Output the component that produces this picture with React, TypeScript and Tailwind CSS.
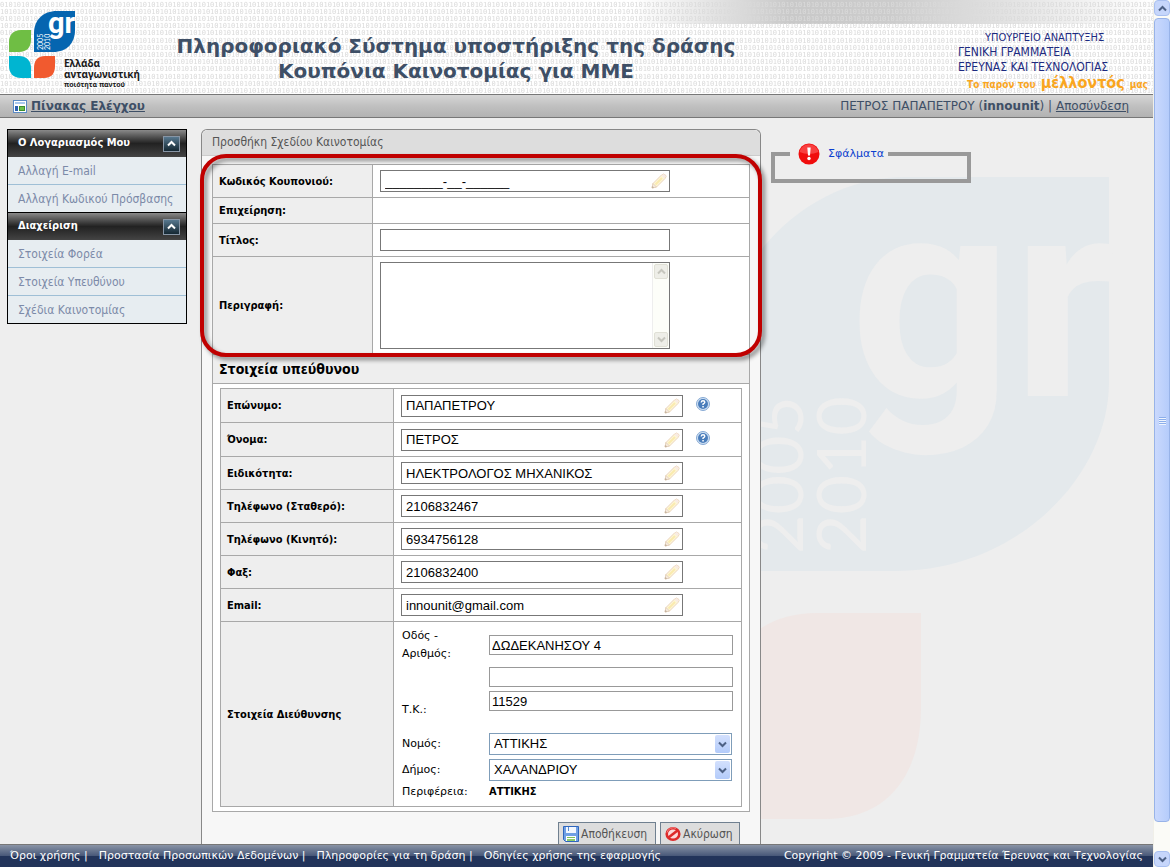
import { ReactNode } from "react";

const menus = [
  { title: "Ο Λογαριασμός Μου", items: ["Αλλαγή E-mail", "Αλλαγή Κωδικού Πρόσβασης"] },
  { title: "Διαχείριση", items: ["Στοιχεία Φορέα", "Στοιχεία Υπευθύνου", "Σχέδια Καινοτομίας"] },
];

const contactFields = [
  { id: "surname", label: "Επώνυμο:", value: "ΠΑΠΑΠΕΤΡΟΥ", help: true },
  { id: "name", label: "Όνομα:", value: "ΠΕΤΡΟΣ", help: true },
  { id: "specialty", label: "Ειδικότητα:", value: "ΗΛΕΚΤΡΟΛΟΓΟΣ ΜΗΧΑΝΙΚΟΣ" },
  { id: "phone", label: "Τηλέφωνο (Σταθερό):", value: "2106832467" },
  { id: "mobile", label: "Τηλέφωνο (Κινητό):", value: "6934756128" },
  { id: "fax", label: "Φαξ:", value: "2106832400" },
  { id: "email", label: "Email:", value: "innounit@gmail.com" },
];

const footerLinks = [
  "Όροι χρήσης",
  "Προστασία Προσωπικών Δεδομένων",
  "Πληροφορίες για τη δράση",
  "Οδηγίες χρήσης της εφαρμογής",
];

const Logo = () => (
  <svg className="block overflow-visible" width="140" height="94" viewBox="0 0 140 94" aria-hidden="true">
    <path d="M75 11H57C43 11 34 20 34 33V52H53C67 52 75 43 75 30Z" fill="#0565b0" />
    <path d="M31 30H21C13 30 9 35 9 42V52H19C27 52 31 47 31 40Z" fill="#6fbe44" />
    <path d="M9 56H19C27 56 31 61 31 68V78H21C13 78 9 73 9 66Z" fill="#00b5d1" />
    <path d="M55 56H45C37 56 34 61 34 68V78H44C52 78 55 73 55 66Z" fill="#f15a2f" />
    <text x="48" y="33" fontFamily="Roboto, sans-serif" fontWeight="700" fontSize="29" fill="#fff">
      gr
    </text>
    <g fontFamily="Lato, sans-serif" fontSize="7" fill="#fff">
      <text transform="translate(43 50) rotate(-90)">2005</text>
      <text transform="translate(50 50) rotate(-90)">2010</text>
    </g>
    <g fontFamily="Noto Sans, sans-serif" fontWeight="700" fill="#1a1a1a">
      <text x="64" y="67" fontSize="10">Ελλάδα</text>
      <text x="64" y="78" fontSize="10">ανταγωνιστική</text>
      <text x="64" y="87" fontSize="7">ποιότητα παντού</text>
    </g>
  </svg>
);

const Watermark = () => (
  <svg
    className="absolute top-[59px] right-[44px] overflow-visible"
    width="393"
    height="650"
    viewBox="0 0 393 650"
    aria-hidden="true"
  >
    <path d="M393 0H190C85 0 0 95 0 200V394H180C300 394 393 300 393 205Z" fill="#e4e9ec" />
    <text x="134" y="219" fontFamily="Roboto, sans-serif" fontWeight="700" fontSize="284" fill="#eeeeee">
      gr
    </text>
    <g fontFamily="Lato, sans-serif" fontSize="68" fill="#eeeeee">
      <text transform="translate(87 377) rotate(-90)">2005</text>
      <text transform="translate(150 377) rotate(-90)">2010</text>
    </g>
    <path d="M205 436H100C40 436 0 480 0 540V642H110C170 642 205 600 205 530Z" fill="#f0e7e5" />
  </svg>
);

const DigitsPattern = () => (
  <svg className="absolute inset-0 h-full w-full" aria-hidden="true">
    <defs>
      <pattern id="digits" width="42" height="36" patternUnits="userSpaceOnUse">
        <g fontFamily="DejaVu Sans Mono, monospace" fontSize="7" fill="#dadada">
          <text x="0" y="6.500">0101010101</text>
          <text x="0" y="13.700">1010101010</text>
          <text x="0" y="20.900">0101010101</text>
          <text x="0" y="28.100">1010101010</text>
          <text x="0" y="35.300">0101010101</text>
        </g>
      </pattern>
      <linearGradient id="band">
        <stop offset="0" stopColor="#bbb" stopOpacity="0" />
        <stop offset="0.3" stopColor="#bbb" stopOpacity="0.8" />
        <stop offset="0.5" stopColor="#bbb" stopOpacity="0.75" />
        <stop offset="1" stopColor="#bbb" stopOpacity="0" />
      </linearGradient>
    </defs>
    <svg x="55%" width="45%" height="24">
      <rect width="100%" height="24" fill="url(#band)" />
    </svg>
    <rect width="100%" height="100%" fill="url(#digits)" />
  </svg>
);

const DashboardIcon = () => (
  <svg width="14" height="13" viewBox="0 0 14 13" aria-hidden="true">
    <rect x="0.5" y="0.5" width="13" height="12" fill="#fff" stroke="#5b8bc4" />
    <rect x="2" y="2" width="10" height="2" fill="#a9c9ee" />
    <rect x="2" y="6" width="3" height="5" fill="#2b5fb0" />
    <rect x="6.5" y="6.5" width="5" height="4" fill="#6cc04a" stroke="#3d8f2c" />
  </svg>
);

const PencilIcon = () => (
  <svg className="pointer-events-none absolute top-[3px] right-[3px]" width="16" height="16" viewBox="0 0 16 16" aria-hidden="true">
    <path d="M1 15L2 10.500L10.500 2Q12.500 0 14.500 2Q16 3.500 14 5.500L5.500 14Z" fill="#fdf6d6" stroke="#ecd5bd" />
    <path d="M4.500 11.500L11 5" stroke="#faeaae" strokeWidth="2" />
    <path d="M10.500 2.500Q12.500 0.500 14.200 2Q15.500 3.500 13.500 5.500Z" fill="#f8ebe4" />
    <path d="M1 15L2 10.500L5.500 14Z" fill="#f8ecdf" stroke="#e4d2be" />
    <path d="M1 15L1.500 13L3 14.500Z" fill="#b9a895" />
  </svg>
);

const HelpIcon = () => (
  <svg width="14" height="14" viewBox="0 0 14 14" aria-hidden="true">
    <circle cx="7" cy="7" r="6.500" fill="#cfe0f3" stroke="#86a9d3" />
    <circle cx="7" cy="7" r="5" fill="#4a7dbb" />
    <path d="M5.200 5.500Q5.300 3.800 7 3.800Q8.800 3.800 8.800 5.300Q8.800 6.300 7 7.200V8" fill="none" stroke="#fff" strokeWidth="1.400" />
    <rect x="6.300" y="9" width="1.500" height="1.500" fill="#fff" />
  </svg>
);

const ErrorIcon = () => (
  <svg width="22" height="22" viewBox="0 0 22 22" aria-hidden="true">
    <circle cx="11" cy="11" r="10.500" fill="#f00c0c" />
    <path d="M1.500 9A9.700 9.700 0 0 1 20.500 9Q11 13 1.500 9Z" fill="#ff6a6a" opacity="0.55" />
    <path d="M9.300 4.500H12.700L12 12.500H10Z" fill="#fff" />
    <circle cx="11" cy="15.500" r="1.700" fill="#fff" />
  </svg>
);

const SaveIcon = () => (
  <svg width="16" height="16" viewBox="0 0 16 16" aria-hidden="true">
    <path d="M0.500 0.500H15.500V15.500H2.500L0.500 13.500Z" fill="#6f9fe4" stroke="#2f66bd" />
    <rect x="3" y="1" width="10" height="6" fill="#f2f7ff" />
    <rect x="5" y="1" width="1" height="4" fill="#5a8ad0" />
    <rect x="3" y="10" width="10" height="5" fill="#fff" />
    <rect x="4" y="11" width="8" height="1" fill="#7cc05a" />
    <rect x="4" y="13" width="8" height="2" fill="#8ccc6c" />
  </svg>
);

const CancelIcon = () => (
  <svg width="16" height="16" viewBox="0 0 16 16" aria-hidden="true">
    <ellipse cx="8" cy="8" rx="6.300" ry="5.800" fill="#fbdada" stroke="#dd2a2a" strokeWidth="2.600" />
    <path d="M3.500 11.500L12.500 4.500" stroke="#dd2a2a" strokeWidth="2.600" />
    <path d="M2 6.500A6.300 5.800 0 0 1 11 2.400" fill="none" stroke="#f58080" strokeWidth="1" />
  </svg>
);

const Chevron = ({ up = false, color = "#4d6185" }: { up?: boolean; color?: string }) => (
  <svg width="9" height="7" viewBox="0 0 9 7" aria-hidden="true">
    <path d={up ? "M1 5.500L4.500 2L8 5.500" : "M1 1.500L4.500 5L8 1.500"} fill="none" stroke={color} strokeWidth="2" />
  </svg>
);

const PageScrollbar = () => (
  <div className="flex w-[17px] shrink-0 flex-col border-l border-[#f0efe8] bg-[#fbfbf7]" aria-hidden="true">
    <div className="flex h-4 items-center justify-center rounded-sm border border-[#a9c0f0] bg-[#c6d6fb]">
      <Chevron up />
    </div>
    <div className="mt-0.5 flex h-[804px] flex-col items-center justify-center gap-px rounded-sm border border-[#98b3e8] bg-linear-to-r from-[#cad9fd] to-[#b5ccfb]">
      {[0, 1, 2, 3].map((el) => (
        <div key={el} className="h-px w-[7px] bg-[#8caeea] shadow-[0_1px_0_#eef4fe]" />
      ))}
    </div>
    <div className="mt-auto flex h-4 items-center justify-center rounded-sm border border-[#a9c0f0] bg-[#c6d6fb]">
      <Chevron />
    </div>
  </div>
);

const Header = () => (
  <header className="relative flex h-[94px] shrink-0 overflow-hidden bg-white">
    <DigitsPattern />
    <div className="relative shrink-0">
      <Logo />
    </div>
    <h1 className="relative flex-1 pt-[34px] pr-[186px] text-center text-xl leading-[25px] font-bold text-[#3e4f66]">
      Πληροφοριακό Σύστημα υποστήριξης της δράσης
      <br />
      Κουπόνια Καινοτομίας για ΜΜΕ
    </h1>
    <div className="relative w-[195px] shrink-0 pt-[30px] font-['DejaVu_Sans_Condensed','DejaVu_Sans',sans-serif] text-xs leading-[15px] text-[#1c2a80]">
      <div className="pl-[27px] text-[11px]">ΥΠΟΥΡΓΕΙΟ ΑΝΑΠΤΥΞΗΣ</div>
      <div>ΓΕΝΙΚΗ ΓΡΑΜΜΑΤΕΙΑ</div>
      <div>ΕΡΕΥΝΑΣ ΚΑΙ ΤΕΧΝΟΛΟΓΙΑΣ</div>
      <div className="flex items-baseline gap-[5px] pl-[9px] text-[10px] leading-4 font-bold whitespace-nowrap text-[#f9a61f]">
        <span>Το παρόν του</span>
        <span className="text-base leading-4">μέλλοντός</span>
        <span>μας</span>
      </div>
    </div>
  </header>
);

const NavBar = () => (
  <nav className="flex h-6 shrink-0 items-center justify-between border-y border-[#777] bg-linear-to-b from-[#d6d6d6] from-0% via-[#c0c0c0] via-50% to-[#b2b2b2] pr-6 pl-[13px] text-xs text-[#3e4f66]">
    <a href="#" className="flex items-center gap-1 font-bold">
      <DashboardIcon />
      <span className="underline">Πίνακας Ελέγχου</span>
    </a>
    <div>
      ΠΕΤΡΟΣ ΠΑΠΑΠΕΤΡΟΥ (<b>innounit</b>) |{" "}
      <a href="#" className="underline">
        Αποσύνδεση
      </a>
    </div>
  </nav>
);

const SideMenu = () => (
  <aside className="w-[180px] shrink-0 self-start border border-t-0 border-black font-['DejaVu_Sans_Condensed','DejaVu_Sans',sans-serif]">
    {menus.map((menu) => (
      <div key={menu.title} className="border-t border-black">
        <div className="flex h-[27px] items-center justify-between bg-linear-to-b from-[#8a8a8a] via-[#222] via-50% to-[#444] pr-[6px] pl-[10px] text-[11px] font-bold text-white">
          {menu.title}
          <button
            type="button"
            aria-label={menu.title}
            className="flex h-4 w-[17px] items-center justify-center border border-[#8795a5] bg-linear-to-b from-[#57788f] to-[#152833]"
          >
            <Chevron up color="#fff" />
          </button>
        </div>
        <ul className="divide-y divide-[#9fbfd6] bg-[#e7edf1]">
          {menu.items.map((el) => (
            <li key={el} className="flex h-7 items-center pl-[10px] text-xs text-[#7c8aa8] last:h-[27px]">
              <a href="#">{el}</a>
            </li>
          ))}
        </ul>
      </div>
    ))}
  </aside>
);

type RowProps = { id: string; label: string; className: string; children?: ReactNode };

const OuterRow = ({ id, label, className, children }: RowProps) => (
  <div className={`flex border-b border-[#a8a8a8] bg-white ${className}`}>
    <label
      htmlFor={id}
      className="flex w-[160px] shrink-0 items-center border-r border-[#a8a8a8] bg-[#eee] pt-0.5 pl-[6px] text-[11px] font-bold"
    >
      {label}
    </label>
    <div className="flex flex-1 items-center pl-[7px]">{children}</div>
  </div>
);

const InnerRow = ({ id, label, className, children }: RowProps) => (
  <div className={`flex border-b border-[#a8a8a8] ${className}`}>
    <label
      htmlFor={id}
      className="flex w-[173px] shrink-0 items-center border-r border-[#a8a8a8] bg-[#eee] pt-0.5 pl-[6px] text-[11px] font-bold"
    >
      {label}
    </label>
    <div className="flex flex-1 items-center pl-[7px]">{children}</div>
  </div>
);

const AddressSelect = ({ id, value }: { id: string; value: string }) => (
  <div className="relative mr-[9px]">
    <select
      id={id}
      className="block h-[22px] w-full appearance-none border border-[#7f9db9] bg-white pl-1 font-['Liberation_Sans',sans-serif] text-[13px]"
    >
      <option>{value}</option>
    </select>
    <span className="pointer-events-none absolute top-0.5 right-0.5 flex h-[18px] w-[15px] items-center justify-center rounded-xs bg-linear-to-b from-[#d3e0fd] to-[#b3cbfa]">
      <Chevron />
    </span>
  </div>
);

const textInput = "block border bg-white font-['Liberation_Sans',sans-serif] text-[13px]";

const AddressFields = () => (
  <div className="grid flex-1 grid-cols-[87px_1fr] items-center gap-y-1 self-start pt-[5px] pl-px font-['DejaVu_Sans',sans-serif] text-[11px]">
    <label htmlFor="street" className="w-16 leading-[18px]">
      Οδός - Αριθμός:
    </label>
    <input id="street" defaultValue="ΔΩΔΕΚΑΝΗΣΟΥ 4" className={`${textInput} mr-2 h-5 border-[#999] pl-0.5`} />
    <input aria-label="Οδός 2" className={`${textInput} col-start-2 mr-2 h-5 border-[#999] pl-0.5`} />
    <label htmlFor="zip" className="leading-[38px]">
      Τ.Κ.:
    </label>
    <input id="zip" defaultValue="11529" className={`${textInput} mr-2 h-5 self-start border-[#999] pl-0.5`} />
    <label htmlFor="county">Νομός:</label>
    <AddressSelect id="county" value="ΑΤΤΙΚΗΣ" />
    <label htmlFor="city">Δήμος:</label>
    <AddressSelect id="city" value="ΧΑΛΑΝΔΡΙΟΥ" />
    <div className="leading-[14px]">Περιφέρεια:</div>
    <div className="font-['DejaVu_Sans_Condensed','DejaVu_Sans',sans-serif] leading-[14px] font-bold">ΑΤΤΙΚΗΣ</div>
  </div>
);

const PlanForm = () => (
  <form className="relative flex w-[560px] shrink-0 flex-col rounded-t-md border border-b-0 border-[#888] bg-[#f7f7f7] font-['DejaVu_Sans_Condensed','DejaVu_Sans',sans-serif] text-black">
    <h2 className="h-[26px] shrink-0 rounded-t-md border-b border-[#ccc] bg-[#ddd] pl-[10px] text-xs leading-[25px] text-[#555]">
      Προσθήκη Σχεδίου Καινοτομίας
    </h2>
    <div className="mx-[10px] mt-2 shrink-0 border border-[#a8a8a8] bg-white">
      <OuterRow id="code" label="Κωδικός Κουπονιού:" className="h-[33px]">
        <div className="relative">
          <input id="code" defaultValue="________-__-______" className={`${textInput} h-[22px] w-[290px] border-[#777] pl-1`} />
          <PencilIcon />
        </div>
      </OuterRow>
      <OuterRow id="company" label="Επιχείρηση:" className="h-[26px]">
        <output id="company" />
      </OuterRow>
      <OuterRow id="title" label="Τίτλος:" className="h-[33px]">
        <input id="title" className={`${textInput} h-[22px] w-[290px] border-[#777] pl-1`} />
      </OuterRow>
      <OuterRow id="description" label="Περιγραφή:" className="h-[98px]">
        <div className="relative">
          <textarea id="description" className={`${textInput} h-[87px] w-[290px] resize-none border-[#777] pl-1`} />
          <div
            className="absolute inset-y-px right-px flex w-[17px] flex-col justify-between border-l border-[#eee] bg-[#fdfef9] p-px"
            aria-hidden="true"
          >
            <span className="flex h-[15px] items-center justify-center rounded-xs border border-[#e0e0d6] bg-[#eeeee8]">
              <Chevron up color="#c6c6be" />
            </span>
            <span className="flex h-[15px] items-center justify-center rounded-xs border border-[#e0e0d6] bg-[#eeeee8]">
              <Chevron color="#c6c6be" />
            </span>
          </div>
        </div>
      </OuterRow>
      <h3 className="h-[29px] border-b border-[#a8a8a8] bg-[#eee] pl-[6px] text-sm leading-7 font-bold">
        Στοιχεία υπεύθυνου
      </h3>
      <div className="mx-[7px] my-1 border border-b-0 border-[#a8a8a8]">
        {contactFields.map((el) => (
          <InnerRow key={el.id} id={el.id} label={el.label} className={el.help ? "h-[34px]" : "h-[33px]"}>
            <div className="relative">
              <input id={el.id} defaultValue={el.value} className={`${textInput} h-[22px] w-[282px] border-[#777] pl-1`} />
              <PencilIcon />
            </div>
            {el.help && (
              <button type="button" aria-label="Βοήθεια" className="mb-1 ml-[13px]">
                <HelpIcon />
              </button>
            )}
          </InnerRow>
        ))}
        <InnerRow id="street" label="Στοιχεία Διεύθυνσης" className="h-[185px]">
          <AddressFields />
        </InnerRow>
      </div>
    </div>
    <div className="mt-[10px] mr-5 flex shrink-0 justify-end gap-1 text-xs text-[#555]">
      <button type="submit" className="flex h-6 w-[98px] items-center gap-0.5 border border-[#708090] bg-[#ddd] pl-1">
        <SaveIcon />
        Αποθήκευση
      </button>
      <button type="button" className="flex h-6 w-20 items-center gap-0.5 border border-[#708090] bg-[#ddd] pl-1">
        <CancelIcon />
        Ακύρωση
      </button>
    </div>
    {/* highlight around the plan fields */}
    <div className="pointer-events-none absolute -inset-x-0.5 top-6 h-[203px] rounded-[26px] border-4 border-[#c00000] drop-shadow-[3px_3px_2px_rgba(0,0,0,0.45)]" />
  </form>
);

const App = () => {
  return (
    <div className="flex h-screen overflow-hidden bg-[#eee] font-['DejaVu_Sans',sans-serif]">
      <div className="flex min-w-0 flex-1 flex-col">
        <Header />
        <NavBar />
        <main className="relative min-h-0 flex-1 overflow-hidden">
          <Watermark />
          <div className="relative flex h-full pt-[11px] pl-[7px]">
            <SideMenu />
            <div className="ml-[14px] flex">
              <PlanForm />
            </div>
            <fieldset className="mt-[14px] ml-[10px] h-10 w-[200px] shrink-0 border-4 border-[#999] pl-[15px]">
              <legend className="flex h-[22px] items-center gap-2 pr-1 pl-2 text-[11px] text-[#0b3fcf]">
                <ErrorIcon />
                Σφάλματα
              </legend>
            </fieldset>
          </div>
        </main>
        <footer className="flex h-[23px] shrink-0 items-center justify-between border-t border-[#777] bg-linear-to-b from-[#8a94a6] from-0% via-[#4a5a7a] via-48% to-[#22345a] to-52% px-[10px] text-[11px] text-white">
          <div className="flex gap-[11px]">
            {footerLinks.map((el, index) => (
              <span key={el}>
                <a href="#">{el}</a>
                {index < footerLinks.length - 1 && " |"}
              </span>
            ))}
          </div>
          <div>Copyright © 2009 - Γενική Γραμματεία Έρευνας και Τεχνολογίας</div>
        </footer>
      </div>
      <PageScrollbar />
    </div>
  );
};

export default App;
